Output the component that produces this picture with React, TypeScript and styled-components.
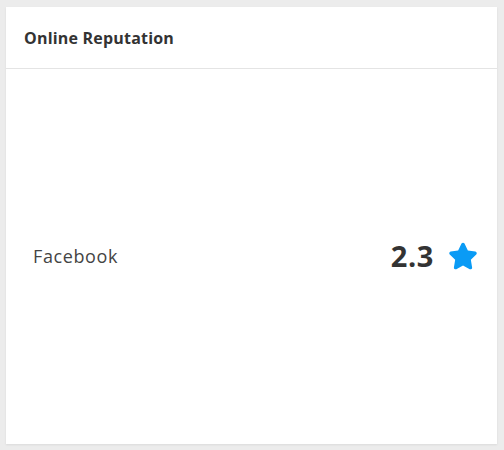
import React from "react";
import styled, { createGlobalStyle } from "styled-components";

const Global = createGlobalStyle`
  html, body { margin: 0; padding: 0; background: #ececec; }
  body { font-family: "Open Sans", Lato, sans-serif; }
`;

const Page = styled.div`
  width: 504px;
  height: 450px;
  box-sizing: border-box;
  padding: 7px 7px 6px 6px;
  display: flex;
`;

const Card = styled.div`
  flex: 1;
  background: #fff;
  display: flex;
  flex-direction: column;
  box-shadow: 0 1px 2px rgba(0, 0, 0, 0.08);
`;

const Header = styled.div`
  height: 62px;
  box-sizing: border-box;
  border-bottom: 1px solid #e4e4e4;
  display: flex;
  align-items: center;
  padding: 1px 18px 0;
  font-size: 16px;
  letter-spacing: 0.2px;
  font-weight: 700;
  color: #333;
`;

const Body = styled.div`
  flex: 1;
  display: flex;
  align-items: center;
  justify-content: space-between;
  padding: 2px 19px 4px 27px;
`;

const Label = styled.span`
  font-size: 18px;
  letter-spacing: 0.6px;
  color: #444;
`;

const Score = styled.div`
  display: flex;
  align-items: center;
  gap: 14px;
`;

const Value = styled.span`
  font-size: 29px;
  letter-spacing: 0.6px;
  font-weight: 700;
  color: #333;
`;

const Star = () => (
  <svg width="30" height="28" viewBox="0 0 576 512" aria-hidden>
    <path
      fill="#0a9bf5"
      d="M316.9 18C311.6 7 300.4 0 288.1 0s-23.4 7-28.8 18L195 150.3 51.4 171.5c-12 1.8-22 10.2-25.7 21.7s-.7 24.2 7.9 32.7L137.8 329 113.2 474.7c-2 12 3 24.2 12.9 31.3s23 8 33.8 2.3l128.3-68.5 128.3 68.5c10.8 5.7 23.9 4.9 33.8-2.3s14.9-19.3 12.9-31.3L438.5 329 542.7 225.9c8.6-8.5 11.7-21.2 7.9-32.7s-13.7-19.9-25.7-21.7L381.2 150.3 316.9 18z"
    />
  </svg>
);

export default function App() {
  return (
    <>
      <Global />
      <Page>
        <Card>
          <Header>Online Reputation</Header>
          <Body>
            <Label>Facebook</Label>
            <Score>
              <Value>2.3</Value>
              <Star />
            </Score>
          </Body>
        </Card>
      </Page>
    </>
  );
}
